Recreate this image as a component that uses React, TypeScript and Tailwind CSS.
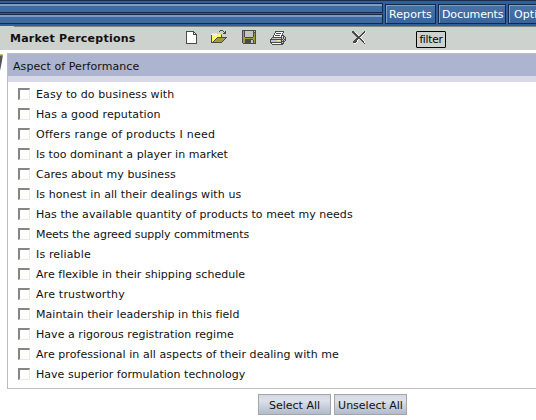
import type { ReactNode } from "react"

const ASPECTS: { label: string; tracking: string }[] = [
  { label: "Easy to do business with", tracking: "tracking-[0.1px]" },
  { label: "Has a good reputation", tracking: "tracking-[0.1px]" },
  { label: "Offers range of products I need", tracking: "tracking-[0.22px]" },
  { label: "Is too dominant a player in market", tracking: "tracking-[0.04px]" },
  { label: "Cares about my business", tracking: "tracking-[0.05px]" },
  { label: "Is honest in all their dealings with us", tracking: "tracking-[0.09px]" },
  { label: "Has the available quantity of products to meet my needs", tracking: "tracking-[0.04px]" },
  { label: "Meets the agreed supply commitments", tracking: "tracking-[-0.08px]" },
  { label: "Is reliable", tracking: "tracking-[0.15px]" },
  { label: "Are flexible in their shipping schedule", tracking: "tracking-[0.04px]" },
  { label: "Are trustworthy", tracking: "tracking-[0.2px]" },
  { label: "Maintain their leadership in this field", tracking: "tracking-[0.04px]" },
  { label: "Have a rigorous registration regime", tracking: "tracking-[0.05px]" },
  { label: "Are professional in all aspects of their dealing with me", tracking: "tracking-[0.06px]" },
  { label: "Have superior formulation technology", tracking: "tracking-[0.02px]" },
]

// one letter per pixel, see PALETTE
const PALETTE: Record<string, string> = {
  k: "#4b4b4b",
  w: "#ffffff",
  y: "#fff36b",
  o: "#a09b3c",
  g: "#c3c5c3",
}

const NEW_ICON = [
  "kkkkkkkk...",
  "kwwwwwwkk..",
  "kwwwwwwkwk.",
  "kwwwwwwkkkk",
  "kwwwwwwwwwk",
  "kwwwwwwwwwk",
  "kwwwwwwwwwk",
  "kwwwwwwwwwk",
  "kwwwwwwwwwk",
  "kwwwwwwwwwk",
  "kwwwwwwwwwk",
  "kwwwwwwwwwk",
  "kkkkkkkkkkk",
]

const OPEN_ICON = [
  ".........kkk....",
  "........k...k.k.",
  ".............kk.",
  ".yyyyy......kkk.",
  "ywywywyyyyo.....",
  "kyyywyyywyk.....",
  "kywyyywyyyk.....",
  "kyyywykkkkkkkkkk",
  "kywyykooooooook.",
  "kyyykooooooook..",
  "kyykooooooook...",
  "kykooooooook....",
  "kkkkkkkkkkk.....",
]

const SAVE_ICON = [
  "kkkkkkkkkkkkkk",
  "kokggggggggkgk",
  "kokggggggggkkk",
  "kokggggggggkok",
  "kokggggggggkok",
  "kokggggggggkok",
  "kokggggggggkok",
  "kookkkkkkkkook",
  "kooooooooooook",
  "kookkkkkkkkook",
  "kookkkkkkggkok",
  "kookkkkkkggkok",
  "kookkkkkkggkok",
  ".kkkkkkkkkkkkk",
]

const PRINT_ICON = [
  ".....kkkkkkkkk..",
  ".....kwwwwwwwk..",
  "....kwkkkkkwk...",
  "....kwwwwwwwk...",
  "...kwkkkkkwkkk..",
  "...kwwwwwwwkwkk.",
  "..kkkkkkkkkkgkgk",
  ".kgggggggggkgkgk",
  "kkkkkkkkkkkkkgkk",
  "kggggggyyygkgkgk",
  "kggggggggggkkkk.",
  "kkkkkkkkkkkkgk..",
  ".kwwwwwwwwwkkk..",
  "..kkkkkkkkkkk...",
]

const DELETE_ICON = [
  "kk..........k.",
  "kkkw.......kkw",
  ".kkkw.....kkw.",
  "..kkkw...kkw..",
  "...kkkw.kkw...",
  "....kkkkkw....",
  ".....kkkw.....",
  "....kkkkkw....",
  "...kkkw.kkw...",
  "..kkkw...kkw..",
  ".kkkkw....kkw.",
  ".kkkw......kw.",
  "..ww........k.",
]

function PixelIcon({ rows, className }: { rows: string[]; className: string }) {
  return (
    <svg
      width={rows[0].length}
      height={rows.length}
      shapeRendering="crispEdges"
      className={`shrink-0 ${className}`}
    >
      {rows.flatMap((row, y) =>
        [...row].map((c, x) =>
          PALETTE[c] ? <rect key={`${x}-${y}`} x={x} y={y} width="1" height="1" fill={PALETTE[c]} /> : null,
        ),
      )}
    </svg>
  )
}

function MenuBar({ className }: { className: string }) {
  return (
    <div className={`border-y border-r border-[#14294a] bg-[#3e6ba2] ${className}`}>
      <div className="h-[2px] bg-[#7d9bc4]" />
    </div>
  )
}

function MenuButton({ className, children }: { className: string; children: ReactNode }) {
  return (
    <div className={`h-5 shrink-0 border border-[#14294a] bg-linear-to-b from-[#4a73a8] to-[#37659d] ${className}`}>
      <div className="h-full border-l border-t border-[#7f9ec5] pl-[2px] leading-[17px] whitespace-nowrap text-white">
        {children}
      </div>
    </div>
  )
}

function ActionButton({ children }: { children: ReactNode }) {
  return (
    <button
      type="button"
      className="h-[21px] w-[73px] border border-[#a5a5a5] bg-linear-to-b from-[#d3d8e3] via-[#dce0e9] via-30% to-[#b0bbcd] pt-px leading-[20px] whitespace-nowrap"
    >
      {children}
    </button>
  )
}

export default function App() {
  return (
    <div className="h-[420px] w-[536px] overflow-hidden bg-white font-['DejaVu_Sans',Verdana,sans-serif] text-[11px] text-[#111]">
      <div className="flex h-[26px] border-t border-[#1c2b49] bg-[#2f609d]">
        <div className="w-[383px] shrink-0 pt-[2px]">
          <MenuBar className="h-[10px]" />
          <MenuBar className="mt-px h-[10px]" />
        </div>
        <div className="ml-[2px] flex gap-[2px] pt-[3px]">
          <MenuButton className="w-[51px] tracking-[0.1px]">Reports</MenuButton>
          <MenuButton className="w-[68px] tracking-[-0.15px]">Documents</MenuButton>
          <MenuButton className="w-[60px] tracking-[0.1px]">
            <span className="pl-[2px]">Options</span>
          </MenuButton>
        </div>
      </div>

      <div className="flex h-6 bg-[#ced2cf]">
        <div className="ml-[14px] flex flex-1 items-start border-t border-[#858585]">
          <div className="-ml-1 w-[176px] shrink-0 pt-[3px] font-bold leading-[17px] whitespace-nowrap tracking-[0.25px]">
            Market Perceptions
          </div>
          <PixelIcon rows={NEW_ICON} className="mt-1" />
          <PixelIcon rows={OPEN_ICON} className="mt-[3px] ml-[14px]" />
          <PixelIcon rows={SAVE_ICON} className="mt-[3px] ml-[15px]" />
          <PixelIcon rows={PRINT_ICON} className="mt-1 ml-[14px]" />
          <PixelIcon rows={DELETE_ICON} className="mt-1 ml-[66px]" />
          <div className="mt-1 ml-[50px] h-[17px] w-[30px] shrink-0 rounded-[1px] border border-black text-center text-[10.5px] leading-[15px] tracking-[-0.2px] text-black">
            filter
          </div>
        </div>
      </div>

      <div className="flex pt-[3px]">
        <div className="w-[7px] shrink-0 pt-px">
          <svg width="3" height="17" className="block">
            <path d="M0 0H3L2 7L0 17Z" fill="#555" />
            <path d="M0 0H3V1.5H0Z" fill="#c5c96b" />
          </svg>
        </div>
        <div className="h-[336px] flex-1 border-y border-l border-[#bcbcbc]">
          <div className="h-[22px] bg-[#adb4cf] pl-[5px] leading-[25px] tracking-[0.08px]">Aspect of Performance</div>
          <div className="h-[6px] bg-[#d8dbe7]" />
          <div className="pt-[2px]">
            {ASPECTS.map((a) => (
              <label key={a.label} className="flex h-5 items-center pl-[10px]">
                <input
                  type="checkbox"
                  className="size-3 shrink-0 appearance-none border-t-2 border-l-2 border-r border-b border-t-[#858585] border-l-[#858585] border-r-[#ece9df] border-b-[#ece9df] bg-white"
                />
                <span className={`ml-[6px] pt-0.5 leading-5 whitespace-nowrap ${a.tracking}`}>{a.label}</span>
              </label>
            ))}
          </div>
        </div>
      </div>

      <div className="flex gap-[3px] pt-[5px] pl-[258px]">
        <ActionButton>Select All</ActionButton>
        <ActionButton>Unselect All</ActionButton>
      </div>
    </div>
  )
}
